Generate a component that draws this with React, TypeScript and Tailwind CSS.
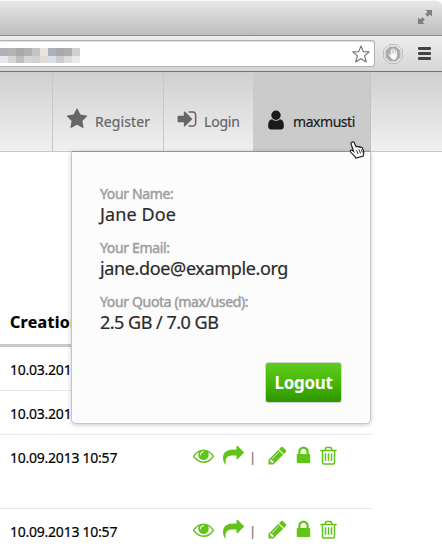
import React from "react";

const STAR =
  "M1728 647q0 22-26 48l-363 354 86 500q1 7 1 20 0 21-10.5 35.5t-30.5 14.5q-19 0-40-12l-449-236-449 236q-22 12-40 12-21 0-31.5-14.5t-10.5-35.5q0-6 2-20l86-500-364-354q-25-27-25-48 0-37 56-46l502-73 225-455q19-41 49-41t49 41l225 455 502 73q56 9 56 46z";
const USER =
  "M1536 1399q0 109-62.5 187t-150.5 78h-854q-88 0-150.5-78t-62.5-187q0-85 8.5-160.5t31.5-152 58.5-131 94-89 134.5-34.5q131 128 313 128t313-128q76 0 134.5 34.5t94 89 58.5 131 31.5 152 8.5 160.5zm-256-887q0 159-112.5 271.5t-271.5 112.5-271.5-112.5-112.5-271.5 112.5-271.5 271.5-112.5 271.5 112.5 112.5 271.5z";
const SIGN_IN =
  "M1312 896q0 26-19 45l-544 544q-19 19-45 19t-45-19-19-45v-288h-448q-26 0-45-19t-19-45v-384q0-26 19-45t45-19h448v-288q0-26 19-45t45-19 45 19l544 544q19 19 19 45zm352-352v704q0 119-84.5 203.5t-203.5 84.5h-320q-13 0-22.5-9.5t-9.5-22.5q0-4-1-20t-.5-26.5 3-23.5 10-19.5 20.5-6.5h320q66 0 113-47t47-113v-704q0-66-47-113t-113-47h-312l-11.5-1-11.5-3-8-5.5-7-9-2-13.5q0-4-1-20t-.5-26.5 3-23.5 10-19.5 20.5-6.5h320q119 0 203.5 84.5t84.5 203.5z";
const EYE =
  "M1664 960q-152-236-381-353 61 104 61 225 0 185-131.5 316.5t-316.5 131.5-316.5-131.5-131.5-316.5q0-121 61-225-229 117-381 353 133 205 333.5 326.5t434.5 121.5 434.5-121.5 333.5-326.5zm-720-384q0-20-14-34t-34-14q-125 0-214.5 89.5t-89.5 214.5q0 20 14 34t34 14 34-14 14-34q0-86 61-147t147-61q20 0 34-14t14-34zm848 384q0 34-20 69-140 230-376.5 368.5t-499.5 138.5-499.5-139-376.5-368q-20-35-20-69t20-69q140-229 376.5-368t499.5-139 499.5 139 376.5 368q20 35 20 69z";
const SHARE =
  "M1792 640q0 26-19 45l-512 512q-19 19-45 19t-45-19-19-45v-256h-224q-98 0-175.5 6t-154 21.5-133 42.5-105.5 69.5-80 101-48.5 138.5-17.5 181q0 55 5 123 0 6 2.5 23.5t2.5 26.5q0 15-8.500 25t-23.500 10q-16 0-28-17-7-9-13-22t-13.500-30-10.500-24q-127-285-127-451 0-199 53-333 162-403 875-403h224v-256q0-26 19-45t45-19 45 19l512 512q19 19 19 45z";
const PENCIL =
  "M491 1536l91-91-235-235-91 91v107h128v128h107zm523-928q0-22-22-22-10 0-17 7l-542 542q-7 7-7 17 0 22 22 22 10 0 17-7l542-542q7-7 7-17zm-54-192l416 416-832 832h-416v-416zm683 96q0 53-37 90l-166 166-416-416 166-165q36-38 90-38 53 0 91 38l235 234q37 39 37 91z";
const LOCK =
  "M640 768h512v-192q0-106-75-181t-181-75-181 75-75 181v192zm832 96v576q0 40-28 68t-68 28h-960q-40 0-68-28t-28-68v-576q0-40 28-68t68-28h32v-192q0-184 132-316t316-132 316 132 132 316v192h32q40 0 68 28t28 68z";
const TRASH =
  "M704 736v576q0 14-9 23t-23 9h-64q-14 0-23-9t-9-23v-576q0-14 9-23t23-9h64q14 0 23 9t9 23zm256 0v576q0 14-9 23t-23 9h-64q-14 0-23-9t-9-23v-576q0-14 9-23t23-9h64q14 0 23 9t9 23zm256 0v576q0 14-9 23t-23 9h-64q-14 0-23-9t-9-23v-576q0-14 9-23t23-9h64q14 0 23 9t9 23zm128 748v-948h-896v948q0 22 7 40.5t14.5 27 10.5 8.5h832q3 0 10.5-8.5t14.5-27 7-40.5zm-672-1076h448l-48-117q-7-9-17-11h-317q-10 2-17 11zm928 32v64q0 14-9 23t-23 9h-96v948q0 83-47 143.5t-113 60.5h-832q-66 0-113-58.5t-47-141.5v-952h-96q-14 0-23-9t-9-23v-64q0-14 9-23t23-9h309l70-167q15-37 54-63t79-26h320q40 0 79 26t54 63l70 167h309q14 0 23 9t9 23z";

function Glyph({ d, className }: { d: string; className: string }) {
  return (
    <svg viewBox="0 0 1792 1792" fill="currentColor" className={`shrink-0 overflow-visible ${className}`}>
      <path d={d} />
    </svg>
  );
}

const MOSAIC = [
  ["#aeb0b8", "#b4b4b4", "#a8a8a8", "#b2b0b0", "#c4c4c4", "#ece4d8", "#a9b3bc", "#a9a8ae", "#adadb4", "#cfcfcf"],
  ["#e8e8ea", "#d6d6d6", "#c0c0c0", "#d6d4d4", "#d4d2d2", "#e0dcd8", "#dce0e6", "#cdcdcf", "#dedede", "#ebebeb"],
];

function BrowserChrome() {
  return (
    <div className="shrink-0">
      <div className="flex h-9 items-start justify-end rounded-tr-md border-t border-b border-t-[#f6f6f6] border-b-[#8c8c8c] bg-linear-to-b from-[#e8e8e8] to-[#bdbdbd] pt-[9px] pr-[10px]">
        <svg viewBox="0 0 14 14" className="h-[14px] w-[14px]" fill="#808080">
          <path d="M7.500 0H14v6.500l-2-2-2.300 2.300-2.500-2.500L9.500 2zM0 7.500l2 2 2.300-2.300 2.500 2.500L4.500 12l2 2H0z" />
        </svg>
      </div>
      <div className="flex h-9 items-center border-b border-b-[#747474] bg-linear-to-b from-[#ededed] to-[#d6d6d6]">
        <div className="flex h-[27px] w-[375px] items-center justify-between rounded-r-[3px] border border-l-0 border-[#b2b2b2] bg-white pr-1 shadow-[inset_0_1px_1px_#ddd]">
          <div className="pt-1">
            {MOSAIC.map((row, y) => (
              <div key={y} className="flex">
                {row.map((color, x) => (
                  <div key={x} className={y === 0 ? "h-2 w-2" : "h-[7px] w-2"} style={{ backgroundColor: color }} />
                ))}
              </div>
            ))}
          </div>
          <svg viewBox="0 0 18 18" className="h-[18px] w-[18px]" fill="none" stroke="#777" strokeWidth="1.200" strokeLinejoin="round">
            <path d="M9 .9l2.300 5.700 5.900.3-4.600 4 1.700 6L9 13.700l-5.300 3.200 1.700-6-4.600-4 5.900-.3z" />
          </svg>
        </div>
        <svg viewBox="0 0 20 20" className="ml-2 h-5 w-5">
          <path d="M6 .7h8L19.300 6v8L14 19.300H6L.7 14V6z" fill="#eee" stroke="#b5b5b5" />
          <path d="M6.700 2.500h6.600l4.200 4.200v6.600l-4.200 4.200H6.700l-4.200-4.200V6.700z" fill="#adadad" />
          <path d="M8.300 10V5.800M10 9.500V4.900M11.700 10V5.500M13.300 11V7.200M6.400 10.600l2 3" stroke="#f8f8f8" strokeWidth="1.100" strokeLinecap="round" />
          <path d="M7.800 9.500h6v3.200L12.500 15.500H9.500L7.800 13z" fill="#f8f8f8" />
        </svg>
        <div className="ml-[15px] flex w-[13px] flex-col gap-[2px]">
          <div className="h-[3px] rounded-[1px] bg-[#444]" />
          <div className="h-[3px] rounded-[1px] bg-[#444]" />
          <div className="h-[3px] rounded-[1px] bg-[#444]" />
        </div>
      </div>
    </div>
  );
}

function Header() {
  return (
    <div className="flex h-20 shrink-0 border-b border-[#c8c8c8] bg-linear-to-b from-[#d0d0d0] to-[#f0f0f0] pl-[52px] text-[14px] text-[#666] [-webkit-text-stroke:0.2px_currentColor]">
      <div className="flex w-[111px] border-l border-[#c8c8c8] pl-[13px]">
        <Glyph d={STAR} className="mt-[36px] h-[22px] w-[22px]" />
        <span className="mt-[40px] ml-[7px] leading-5 tracking-[0.1px]">Register</span>
      </div>
      <div className="flex w-[90px] border-l border-[#c8c8c8] pl-[12px]">
        <Glyph d={SIGN_IN} className="mt-[36px] h-[22px] w-[22px]" />
        <span className="mt-[40px] ml-[6px] leading-5 tracking-[-0.2px]">Login</span>
      </div>
      <div className="flex w-[118px] border-r border-[#c2c2c2] bg-[#cbcbcb] pl-[12px] text-[#1b1b1b]">
        <Glyph d={USER} className="mt-[37px] h-[22px] w-[22px]" />
        <span className="mt-[40px] ml-[6px] leading-5 tracking-[-0.45px]">maxmusti</span>
      </div>
    </div>
  );
}

function Actions() {
  return (
    <div className="flex text-[#61c419]">
      <Glyph d={EYE} className="h-[21px] w-[21px]" />
      <Glyph d={SHARE} className="ml-[9px] h-[21px] w-[21px]" />
      <span className="ml-[5px] w-2 text-[13px] leading-6 text-[#777]">|</span>
      <Glyph d={PENCIL} className="ml-[10px] h-[21px] w-[21px]" />
      <Glyph d={LOCK} className="ml-[5px] h-[21px] w-[21px]" />
      <Glyph d={TRASH} className="ml-[4px] h-[21px] w-[21px]" />
    </div>
  );
}

function FileTable() {
  return (
    <div className="w-[371px] pt-[152px] text-[14px] leading-5 tracking-[-0.24px] text-black [-webkit-text-stroke:0.2px_currentColor]">
      <div className="h-[43px] border-b-[3px] border-[#c9c9c9] pt-[8px] pl-[10px] text-[16px] font-bold tracking-[0.3px]">Creation</div>
      <div className="h-11 border-b border-[#e8e8e8] pt-[13px] pl-[10px]">10.03.2013 10:57</div>
      <div className="h-11 border-b border-[#e8e8e8] pt-[13px] pl-[10px]">10.03.2013 10:57</div>
      <div className="flex h-[74px] border-b border-[#e8e8e8] pt-[13px] pl-[10px]">
        <span className="w-[183px]">10.09.2013 10:57</span>
        <div className="mt-[-3px]"><Actions /></div>
      </div>
      <div className="flex h-[46px] pt-[13px] pl-[10px]">
        <span className="w-[183px]">10.09.2013 10:57</span>
        <div className="mt-[-3px]"><Actions /></div>
      </div>
    </div>
  );
}

function Field({ label, value, tracking }: { label: string; value: string; tracking: string }) {
  return (
    <div className="h-[54px]">
      <div className="h-5 text-[14px] leading-5 tracking-[-0.35px] text-[#a0a0a0] [-webkit-text-stroke:0.5px_currentColor]">{label}</div>
      <div className={`h-5 text-[18px] leading-5 text-[#2b2b2b] [-webkit-text-stroke:0.2px_currentColor] ${tracking}`}>{value}</div>
    </div>
  );
}

function AccountMenu() {
  return (
    <div className="absolute top-[151px] left-[71px] flex h-[273px] w-[300px] flex-col rounded-b-[5px] border border-t-0 border-[#c6c6c6] bg-[#fcfcfc] shadow-[0_1px_4px_rgba(0,0,0,0.22)]">
      <div className="h-px shrink-0 bg-[#61c419]" />
      <div className="flex flex-col pt-[32px] pl-[28px]">
        <Field label="Your Name:" value="Jane Doe" tracking="tracking-[0.1px]" />
        <Field label="Your Email:" value="jane.doe@example.org" tracking="tracking-[-0.36px]" />
        <Field label="Your Quota (max/used):" value="2.5 GB / 7.0 GB" tracking="tracking-[-0.5px]" />
      </div>
      <button className="mt-[16px] mr-[28px] h-[41px] w-[77px] self-end rounded-[3px] border border-[#d0d6cc] bg-linear-to-b from-[#5fcb1c] via-[#48b70a] to-[#2c9500] text-[17px] leading-5 font-bold tracking-[-0.35px] text-white">
        Logout
      </button>
    </div>
  );
}

export default function App() {
  return (
    <div className="relative flex h-[555px] w-[442px] flex-col overflow-hidden bg-white font-['Noto_Sans','Open_Sans',sans-serif]">
      <BrowserChrome />
      <Header />
      <FileTable />
      <AccountMenu />
      <svg viewBox="0 0 16 18" className="absolute top-[141px] left-[349px] h-[18px] w-4">
        <path
          d="M3.200 1.100c1.100-.5 1.900.1 2.300 1.100l1.600 3.500c.6-.6 1.600-.5 2.100.2.700-.5 1.700-.2 2.100.5.900-.4 1.900.1 2.300 1l1 3.100c.3 1.500-.2 2.600-.3 4.500l-7.300 2.100c-1.300-2.500-4.200-4.100-5.500-6.300-.6-1.400.8-2.100 2-1.200l1.100.8L2.100 3.300c-.4-1 .2-1.800 1.100-2.200z"
          fill="#fff"
          stroke="#222"
          strokeWidth="1.200"
        />
        <path d="M7.500 9l1.500 4M10 8.500l1.500 4M12.300 8.500l1 3" stroke="#222" strokeWidth=".9" />
      </svg>
    </div>
  );
}
